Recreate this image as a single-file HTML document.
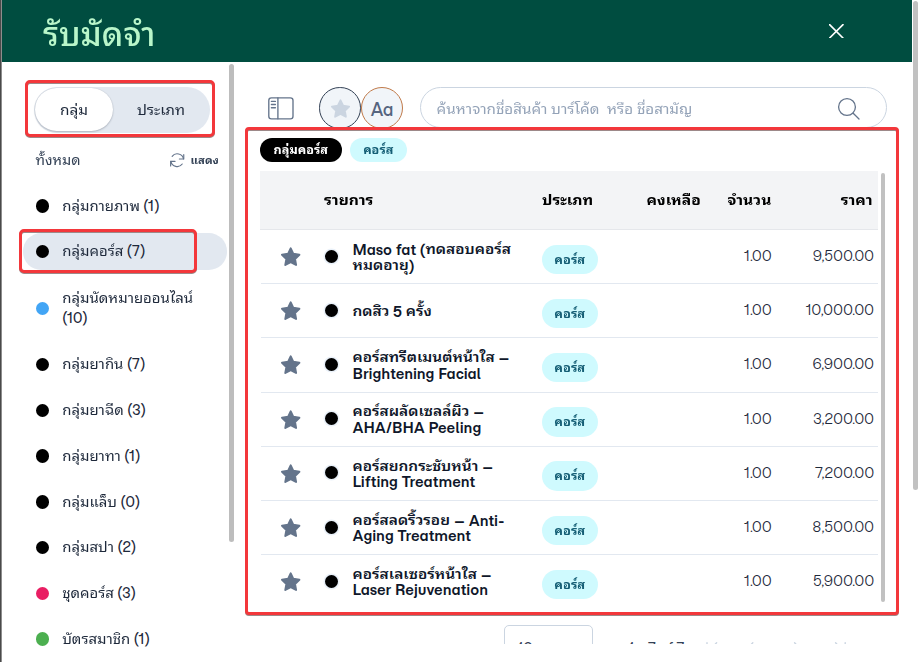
<!DOCTYPE html>
<html lang="th">
<head>
<meta charset="utf-8">
<title>รับมัดจำ</title>
<style>
  html,body{margin:0;padding:0;}
  body{width:920px;height:662px;overflow:hidden;background:#fff;position:relative;
    font-family:"Momo Trust Sans","Lexend","Liberation Sans","Noto Sans Thai Looped","Sarabun","Loma","Noto Sans Thai",sans-serif;
    color:#0f172a;-webkit-font-smoothing:antialiased;}
  .abs{position:absolute;}
  .nw{white-space:nowrap;}
  /* backdrop strip at far left */
  #strip{left:0;top:0;width:2px;height:662px;background:linear-gradient(90deg,#4a4a4a 0,#4a4a4a 1px,#8d8d8d 1px,#8d8d8d 2px);}
  #hdr{left:2px;top:0;width:910px;height:61.5px;background:#004d40;}
  #title{left:43.3px;top:1.6px;height:62px;line-height:62px;font-size:34px;font-weight:460;transform:scaleX(.975);transform-origin:0 0;color:#b9f6ca;letter-spacing:0;}
  #pgscroll{left:913.4px;top:1px;width:4.6px;height:489px;border-radius:3px;background:#c1c1c1;}
  /* ---------- sidebar ---------- */
  #sbscroll{left:229px;top:63.5px;width:4.5px;height:478.5px;border-radius:3px;background:#bdbdbd;}
  .red{border:3px solid #f3373b;border-radius:5px;box-sizing:border-box;filter:drop-shadow(0 1px .4px rgba(60,20,20,.5));}
  #toggle{left:34px;top:87px;width:176px;height:45.5px;border-radius:23px;background:#e2e8f0;}
  #pill{left:35px;top:88px;width:78px;height:43px;border-radius:22px;background:#fff;box-shadow:0 1px 2px rgba(15,23,42,.22),0 0 1px rgba(15,23,42,.18);}
  .tg{top:88px;height:43px;line-height:43px;font-size:15.4px;color:#1e293b;text-align:center;}
  #all{left:35.5px;top:148.8px;line-height:21px;font-size:14.5px;color:#334155;}
  #show{left:190.6px;top:151px;line-height:18px;font-size:11.3px;font-weight:700;color:#334155;}
  .it{left:0;width:228px;height:21.5px;}
  .it .dot{position:absolute;left:35.5px;top:4px;width:13.5px;height:13.5px;border-radius:50%;background:#000;}
  .it .tx{position:absolute;left:62.2px;top:-.3px;line-height:21.5px;font-size:13.9px;color:#1e293b;white-space:nowrap;}
  .it .tx .t{font-size:14.95px;}
  #sel{left:23px;top:233px;width:204px;height:36.5px;border-radius:18.25px;background:#e2e8f0;}
  /* ---------- toolbar ---------- */
  .circ{width:41.5px;height:41.5px;border-radius:50%;background:#f1f5f9;box-sizing:border-box;}
  #search{left:419.5px;top:87px;width:467.5px;height:41px;border:1px solid #cbd5e1;border-radius:20.5px;box-sizing:border-box;background:#fff;}
  #ph{left:436.6px;top:97px;line-height:22px;font-size:15.2px;color:#94a3b8;}
  /* ---------- table ---------- */
  .chip{top:138px;height:24px;line-height:23px;border-radius:12px;font-size:12.6px;font-weight:700;text-align:center;}
  #thead{left:260px;top:171px;width:618px;height:58.5px;background:#f3f4f6;border-bottom:1px solid #e5e7eb;box-sizing:border-box;}
  .th{top:187px;line-height:24px;font-size:15.6px;font-weight:700;color:#000;}
  .row{left:260.5px;width:617.5px;height:54.2px;border-bottom:1px solid #e2e8f0;box-sizing:border-box;}
  .row .star{position:absolute;left:19px;top:17.1px;width:21.4px;height:20.4px;}
  .row .dot{position:absolute;left:64.7px;top:19.5px;width:13px;height:13px;border-radius:50%;background:#000;box-shadow:0 0 0 1.5px #eaf1f9;}
  .row .nm{position:absolute;left:92px;font-size:14.7px;font-weight:560;line-height:16.3px;color:#0f172a;white-space:nowrap;}
  .row .nm.two{top:10.9px;}
  .row .nm .l{display:block;height:16.25px;line-height:16.25px;}
  .row .nm .t{font-size:15.45px;transform:translateY(-.9px) scaleY(.9);}
  .t{display:inline-block;transform:scaleY(.9);transform-origin:0 calc(50% + .35em);}
  .row .nm.one{top:18.9px;}
  .row .tp{position:absolute;left:281px;top:14.6px;width:56.5px;height:29.5px;line-height:29.5px;border-radius:15px;background:#cffafe;color:#155e75;font-size:12.9px;font-weight:700;text-align:center;}
  .row .q,.row .p{position:absolute;top:15px;line-height:22px;font-size:14.3px;font-weight:350;letter-spacing:-.1px;color:#1e293b;text-align:right;white-space:nowrap;}
  .row .q{right:106.2px;}
  .row .p{right:3.9px;}
  #tbscroll{left:880.5px;top:173px;width:4.2px;height:429px;border-radius:3px;background:#c1c1c1;}
  #clip{left:0;top:0;width:920px;height:662px;overflow:hidden;}
  #pgclip{left:240px;top:0;width:672px;height:644px;overflow:hidden;}
  #pgclip>*{margin-left:-240px;}
  #psel{left:504px;top:625px;width:88.8px;height:40px;border:1px solid #cbd5e1;border-radius:5px;box-sizing:border-box;}
  .pg{top:638px;line-height:20px;font-size:14px;color:#334155;}
</style>
</head>
<body>
<div id="clip" class="abs">

<!-- header -->
<div id="strip" class="abs"></div>
<div id="hdr" class="abs"></div>
<div id="title" class="abs nw">รับมัดจำ</div>
<svg class="abs" style="left:829.3px;top:23.6px" width="14.6" height="14.6" viewBox="0 0 14.6 14.6"><path d="M0.6 0.6 L14 14 M14 0.6 L0.6 14" stroke="#fff" stroke-width="1.65" stroke-linecap="round" fill="none"/></svg>
<div id="pgscroll" class="abs"></div>

<!-- sidebar -->
<div id="sbscroll" class="abs"></div>
<div id="toggle" class="abs"></div>
<div id="pill" class="abs"></div>
<div class="abs tg nw" style="left:35px;width:78px;"><span class="t">กลุ่ม</span></div>
<div class="abs tg nw" style="left:113px;width:96px;"><span class="t">ประเภท</span></div>
<div class="abs red" style="left:25px;top:80px;width:189.5px;height:57px;"></div>

<div id="all" class="abs nw"><span class="t">ทั้งหมด</span></div>
<svg class="abs" style="left:168.6px;top:151.8px" width="16.4" height="16.4" viewBox="0 0 24 24" fill="none" stroke="#64748b" stroke-width="1.7" stroke-linecap="round" stroke-linejoin="round"><path d="M21.2 10.2A9.3 9.3 0 0 0 4.6 6.4"/><path d="M21.6 3.6v6.6h-6.4" transform="translate(0,0)"/><path d="M2.8 13.8a9.3 9.3 0 0 0 16.6 3.8"/><path d="M2.4 20.4v-6.6h6.4"/></svg>
<div id="show" class="abs nw"><span class="t">แสดง</span></div>

<div id="sel" class="abs"></div>
<div class="abs red" style="left:19.3px;top:229.3px;width:177.8px;height:44px;"></div>

<div class="abs it" style="top:195px"><span class="dot"></span><span class="tx"><span class="t">กลุ่มกายภาพ</span> (1)</span></div>
<div class="abs it" style="top:240.75px"><span class="dot"></span><span class="tx"><span class="t">กลุ่มคอร์ส</span> (7)</span></div>
<div class="abs it" style="top:297.5px"><span class="dot" style="background:#42a5f5"></span><span class="tx" style="top:-9.9px;line-height:20.2px"><span class="t">กลุ่มนัดหมายออนไลน์</span><br>(10)</span></div>
<div class="abs it" style="top:353.75px"><span class="dot"></span><span class="tx"><span class="t">กลุ่มยากิน</span> (7)</span></div>
<div class="abs it" style="top:399.5px"><span class="dot"></span><span class="tx"><span class="t">กลุ่มยาฉีด</span> (3)</span></div>
<div class="abs it" style="top:445.25px"><span class="dot"></span><span class="tx"><span class="t">กลุ่มยาทา</span> (1)</span></div>
<div class="abs it" style="top:491px"><span class="dot"></span><span class="tx"><span class="t">กลุ่มแล็บ</span> (0)</span></div>
<div class="abs it" style="top:536.75px"><span class="dot"></span><span class="tx"><span class="t">กลุ่มสปา</span> (2)</span></div>
<div class="abs it" style="top:582.5px"><span class="dot" style="background:#e91e63"></span><span class="tx"><span class="t">ชุดคอร์ส</span> (3)</span></div>
<div class="abs it" style="top:628.25px"><span class="dot" style="background:#4caf50"></span><span class="tx"><span class="t">บัตรสมาชิก</span> (1)</span></div>

<!-- toolbar -->
<svg class="abs" style="left:268.4px;top:96.8px" width="26" height="23" viewBox="0 0 26 23" fill="none" stroke="#64748b" stroke-width="1.35" stroke-linecap="round"><rect x="0.8" y="0.8" width="24.2" height="21" rx="2.6"/><path d="M9.9 0.8V21.8M3.4 4.4h4M3.4 7.5h4M3.4 10.7h4"/></svg>
<div class="abs circ" style="left:319px;top:87px;border:1px solid #334155;"></div>
<svg class="abs" style="left:329.7px;top:98.8px" width="21" height="20" viewBox="0 0 20 19"><path d="M10 1.2l2.5 5.2 5.7.8-4.1 4 1 5.7L10 14.2l-5.1 2.7 1-5.7-4.1-4 5.7-.8z" fill="#cbd5e1" stroke="#cbd5e1" stroke-width="1.8" stroke-linejoin="round"/></svg>
<div class="abs circ" style="left:360.6px;top:87px;width:42px;height:42px;border:1px solid #c07a4a;"></div>
<div class="abs nw" style="left:360.6px;top:87px;width:42px;height:42px;line-height:46.8px;text-align:center;font-size:17.4px;letter-spacing:-0.7px;font-weight:500;color:#56657f;">Aa</div>
<div id="search" class="abs"></div>
<div id="ph" class="abs nw"><span class="t">ค้นหาจากชื่อสินค้า บาร์โค้ด&nbsp; หรือ ชื่อสามัญ</span></div>
<svg class="abs" style="left:836px;top:96px" width="26" height="26" viewBox="0 0 26 26" fill="none" stroke="#64748b" stroke-width="1.3" stroke-linecap="round"><circle cx="11" cy="11" r="8.4"/><path d="M17.2 17.2L23 23"/></svg>

<!-- table -->
<div class="abs chip nw" style="left:260px;width:81.5px;background:#000;color:#fff;"><span class="t">กลุ่มคอร์ส</span></div>
<div class="abs chip nw" style="left:350px;width:56.5px;background:#cffafe;color:#155e75;"><span class="t">คอร์ส</span></div>
<div id="thead" class="abs"></div>
<div class="abs th nw" style="left:324px;"><span class="t">รายการ</span></div>
<div class="abs th nw" style="left:542px;"><span class="t">ประเภท</span></div>
<div class="abs th nw" style="left:646.6px;"><span class="t">คงเหลือ</span></div>
<div class="abs th nw" style="left:727.5px;"><span class="t">จำนวน</span></div>
<div class="abs th nw" style="right:47.5px;"><span class="t">ราคา</span></div>

<div class="abs row" style="top:230.00px"><svg class="star" viewBox="0 0 20 19"><use href="#st"/></svg><span class="dot"></span><span class="nm two"><span class="l">Maso fat (<span class="t">ทดสอบคอร์ส</span></span><span class="l"><span class="t">หมดอายุ</span>)</span></span><span class="tp"><span class="t">คอร์ส</span></span><span class="q">1.00</span><span class="p">9,500.00</span></div>
<div class="abs row" style="top:284.20px"><svg class="star" viewBox="0 0 20 19"><use href="#st"/></svg><span class="dot"></span><span class="nm one"><span class="l"><span class="t">กดสิว</span> 5 <span class="t">ครั้ง</span></span></span><span class="tp"><span class="t">คอร์ส</span></span><span class="q">1.00</span><span class="p">10,000.00</span></div>
<div class="abs row" style="top:338.40px"><svg class="star" viewBox="0 0 20 19"><use href="#st"/></svg><span class="dot"></span><span class="nm two"><span class="l"><span class="t">คอร์สทรีตเมนต์หน้าใส</span> –</span><span class="l">Brightening Facial</span></span><span class="tp"><span class="t">คอร์ส</span></span><span class="q">1.00</span><span class="p">6,900.00</span></div>
<div class="abs row" style="top:392.60px"><svg class="star" viewBox="0 0 20 19"><use href="#st"/></svg><span class="dot"></span><span class="nm two"><span class="l"><span class="t">คอร์สผลัดเซลล์ผิว</span> –</span><span class="l">AHA/BHA Peeling</span></span><span class="tp"><span class="t">คอร์ส</span></span><span class="q">1.00</span><span class="p">3,200.00</span></div>
<div class="abs row" style="top:446.80px"><svg class="star" viewBox="0 0 20 19"><use href="#st"/></svg><span class="dot"></span><span class="nm two"><span class="l"><span class="t">คอร์สยกกระชับหน้า</span> –</span><span class="l">Lifting Treatment</span></span><span class="tp"><span class="t">คอร์ส</span></span><span class="q">1.00</span><span class="p">7,200.00</span></div>
<div class="abs row" style="top:501.00px"><svg class="star" viewBox="0 0 20 19"><use href="#st"/></svg><span class="dot"></span><span class="nm two"><span class="l"><span class="t">คอร์สลดริ้วรอย</span> – Anti-</span><span class="l">Aging Treatment</span></span><span class="tp"><span class="t">คอร์ส</span></span><span class="q">1.00</span><span class="p">8,500.00</span></div>
<div class="abs row" style="top:555.20px;border-bottom:none"><svg class="star" viewBox="0 0 20 19"><use href="#st"/></svg><span class="dot"></span><span class="nm two"><span class="l"><span class="t">คอร์สเลเซอร์หน้าใส</span> –</span><span class="l">Laser Rejuvenation</span></span><span class="tp"><span class="t">คอร์ส</span></span><span class="q">1.00</span><span class="p">5,900.00</span></div>
<div id="tbscroll" class="abs"></div>

<!-- big red annotation box -->
<div class="abs red" style="left:245px;top:126.5px;width:653.8px;height:488.4px;border-width:3px;border-radius:4px;"></div>

<!-- paginator (clipped) -->
<div id="pgclip" class="abs">
<div id="psel" class="abs"></div>
<div class="abs pg nw" style="left:517px;">10</div>
<div class="abs pg nw" style="left:628px;">1 - 7 of 7</div>
<svg class="abs" style="left:700px;top:640px" width="160" height="20" viewBox="0 0 160 20" fill="none" stroke="#cbd5e1" stroke-width="1.4" stroke-linecap="round" stroke-linejoin="round"><path d="M7 2.6V16M16.6 2.8L10.6 9.2L16.6 15.6M52.8 2.8L46.8 9.2L52.8 15.6M94.6 2.8L100.6 9.2L94.6 15.6M135.6 2.8L141.6 9.2L135.6 15.6M145.2 2.6V16"/></svg>
</div>

</div>
<svg width="0" height="0" style="position:absolute"><defs><path id="st" d="M10 1.3l2.45 5.1 5.65.8-4.1 3.95 1 5.6L10 14.1l-5 2.65 1-5.6-4.1-3.95 5.65-.8z" fill="#64748b" stroke="#64748b" stroke-width="1.9" stroke-linejoin="round"/></defs></svg>
</body>
</html>
